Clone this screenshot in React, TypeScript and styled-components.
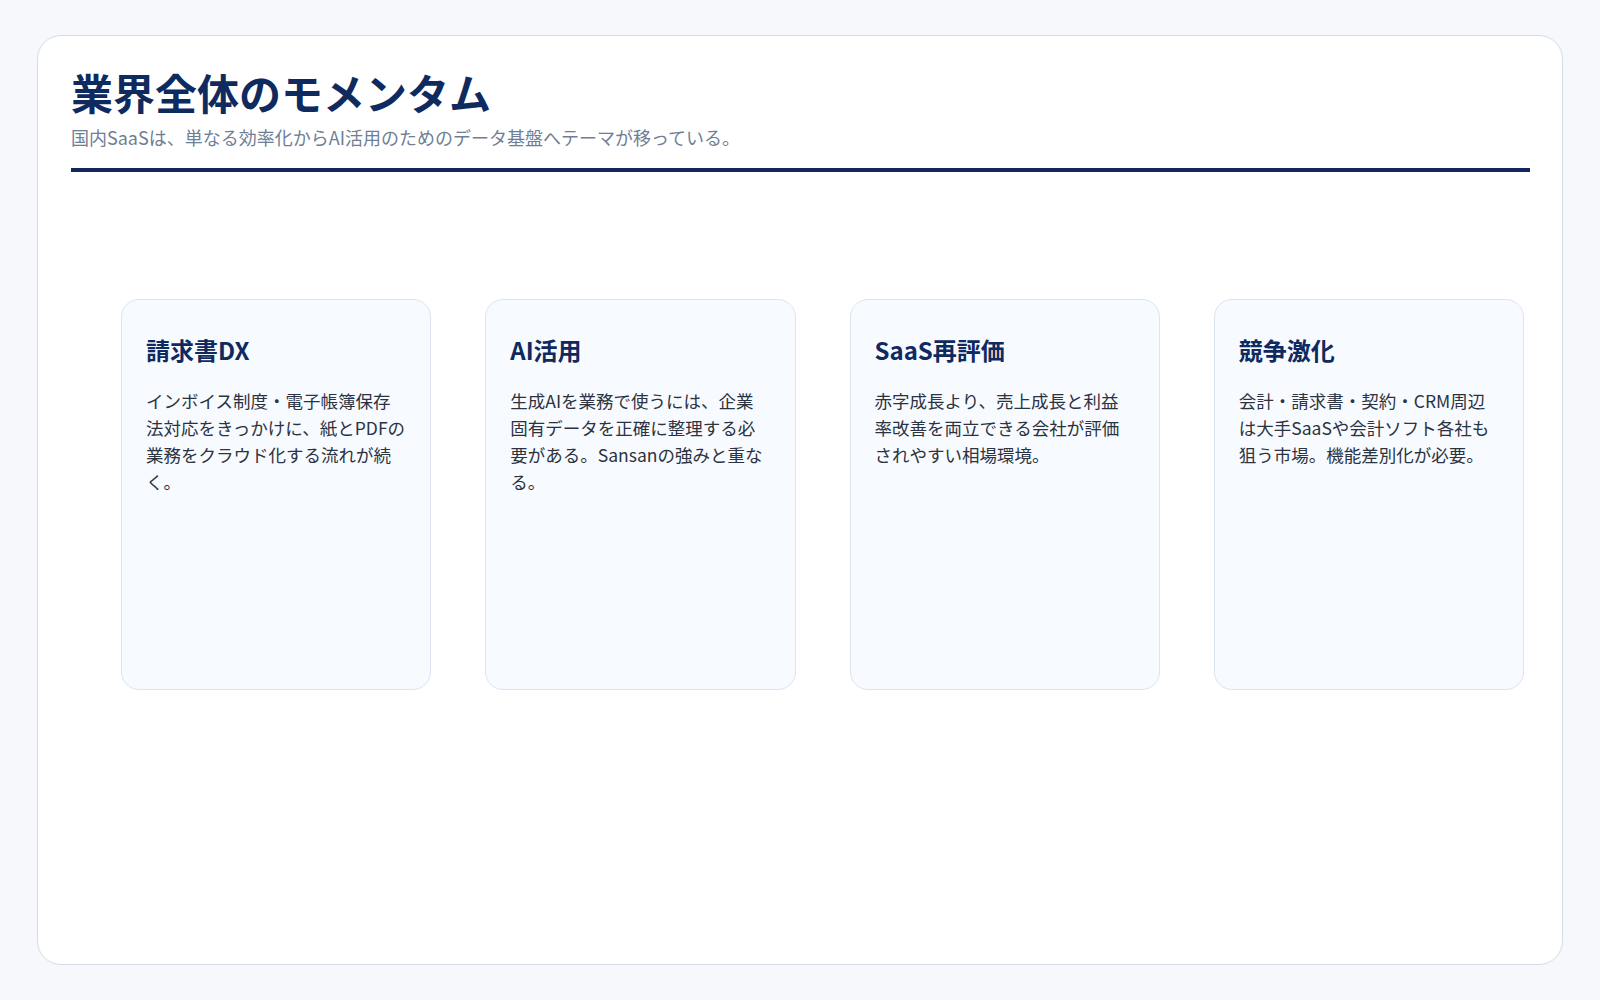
import React from "react";
import styled, { createGlobalStyle } from "styled-components";

const Global = createGlobalStyle`
  html, body { margin: 0; padding: 0; background: #f6f8fb; }
  body { font-family: "Noto Sans CJK JP", "Noto Sans", sans-serif; }
`;

const Page = styled.div`
  padding: 35px 37px;
  box-sizing: border-box;
  height: 1000px;
`;

const Frame = styled.div`
  height: 930px;
  box-sizing: border-box;
  background: #fff;
  border: 1.5px solid #d3ddea;
  border-radius: 24px;
  padding: 30px 32px 0 33px;
`;

const Title = styled.h1`
  margin: 0;
  font-size: 42px;
  font-weight: 700;
  color: #0f2a5f;
  line-height: 1.25;
`;

const Sub = styled.p`
  margin: 6px 0 0;
  font-size: 18px;
  color: #6f7e95;
  line-height: 1.4;
`;

const Rule = styled.div`
  height: 4px;
  background: #13275c;
  margin-top: 18px;
`;

const Row = styled.div`
  display: grid;
  grid-template-columns: repeat(4, 1fr);
  gap: 54px;
  margin: 127px 6px 0 50px;
`;

const Card = styled.div`
  height: 391px;
  box-sizing: border-box;
  background: #f7faff;
  border: 1px solid #dbe4f0;
  border-radius: 18px;
  padding: 34px 24px;
`;

const CardTitle = styled.h2`
  margin: 0;
  font-size: 24px;
  font-weight: 700;
  color: #0f2a5f;
  line-height: 1.3;
`;

const CardBody = styled.p`
  margin: 22px 0 0;
  font-size: 17.5px;
  line-height: 27px;
  color: #2b3340;
`;

const cards = [
  ["請求書DX", "インボイス制度・電子帳簿保存法対応をきっかけに、紙とPDFの業務をクラウド化する流れが続く。"],
  ["AI活用", "生成AIを業務で使うには、企業固有データを正確に整理する必要がある。Sansanの強みと重なる。"],
  ["SaaS再評価", "赤字成長より、売上成長と利益率改善を両立できる会社が評価されやすい相場環境。"],
  ["競争激化", "会計・請求書・契約・CRM周辺は大手SaaSや会計ソフト各社も狙う市場。機能差別化が必要。"],
];

export default function App() {
  return (
    <Page>
      <Global />
      <Frame>
        <Title>業界全体のモメンタム</Title>
        <Sub>国内SaaSは、単なる効率化からAI活用のためのデータ基盤へテーマが移っている。</Sub>
        <Rule />
        <Row>
          {cards.map(([t, b]) => (
            <Card key={t}>
              <CardTitle>{t}</CardTitle>
              <CardBody>{b}</CardBody>
            </Card>
          ))}
        </Row>
      </Frame>
    </Page>
  );
}
